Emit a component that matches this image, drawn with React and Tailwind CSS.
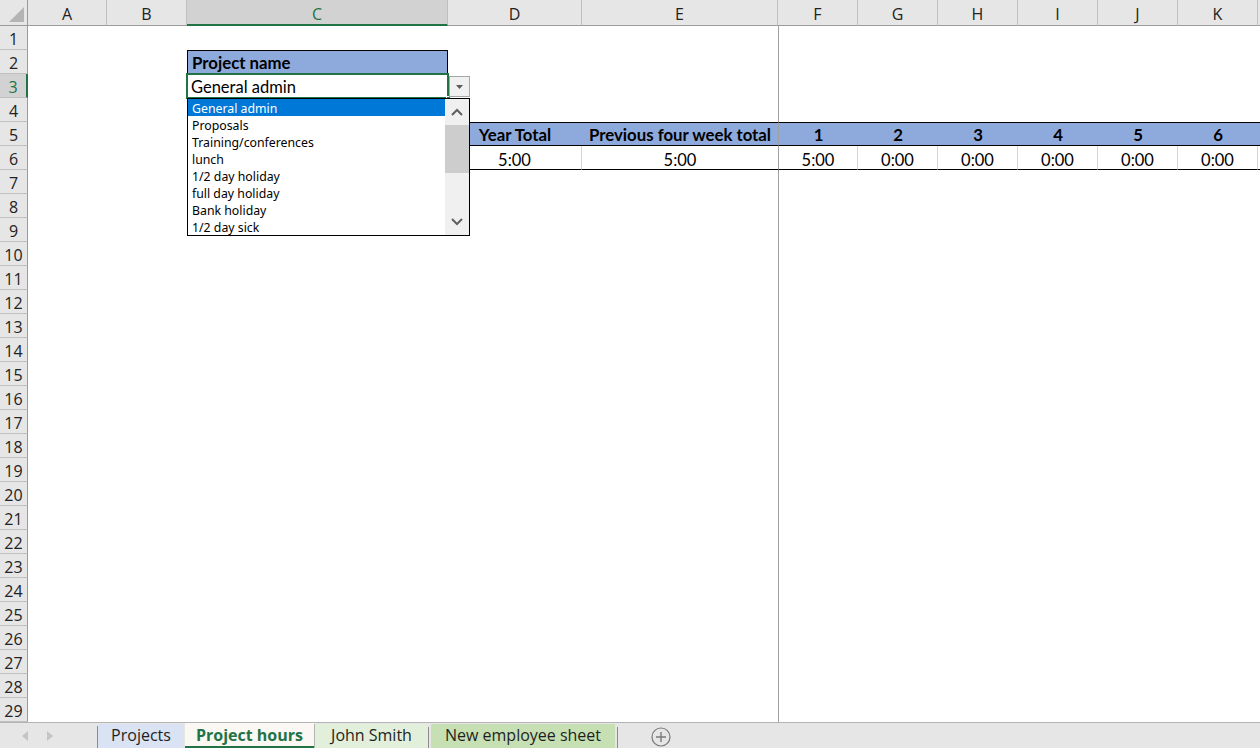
import React from 'react'

const COLS = [
  { k: 'A', w: 'w-[79px]' },
  { k: 'B', w: 'w-[80px]' },
  { k: 'C', w: 'w-[261px]' },
  { k: 'D', w: 'w-[134px]' },
  { k: 'E', w: 'w-[196px]' },
  { k: 'F', w: 'w-[80px]' },
  { k: 'G', w: 'w-[80px]' },
  { k: 'H', w: 'w-[80px]' },
  { k: 'I', w: 'w-[80px]' },
  { k: 'J', w: 'w-[80px]' },
  { k: 'K', w: 'w-[80px]' },
]

const HEAD5 = { D: 'Year Total', E: 'Previous four week total', F: '1', G: '2', H: '3', I: '4', J: '5', K: '6' }
const VAL6 = { D: '5:00', E: '5:00', F: '5:00', G: '0:00', H: '0:00', I: '0:00', J: '0:00', K: '0:00' }

const OPTIONS = [
  'General admin',
  'Proposals',
  'Training/conferences',
  'lunch',
  '1/2 day holiday',
  'full day holiday',
  'Bank holiday',
  '1/2 day sick',
]

const cellFont = { fontFamily: 'Lato, Carlito, Calibri, sans-serif' }
const uiFont = { fontFamily: '"Open Sans", "Segoe UI", sans-serif' }

const DropdownList = () => (
  <div className="absolute left-0 top-[24px] z-20 flex h-[138px] w-[283px] border border-black bg-white" style={{ fontFamily: '"Noto Sans", Tahoma, sans-serif' }}>
    <div className="flex-1">
      {OPTIONS.map((o, i) => (
        <div key={o} className={`h-[17px] pl-[4px] text-[12.3px] leading-[19px] ${i === 0 ? 'bg-[#0078d7] text-white' : 'text-black'}`}>{o}</div>
      ))}
    </div>
    <div className="flex w-[24px] flex-col bg-[#f0f0f0]">
      <div className="flex h-[26px] items-center justify-center">
        <svg width="12" height="8" viewBox="0 0 12 8"><path d="M1 7 L6 2 L11 7" fill="none" stroke="#606060" strokeWidth="2" /></svg>
      </div>
      <div className="h-[48px] bg-[#cdcdcd]" />
      <div className="flex-1" />
      <div className="flex h-[26px] items-center justify-center">
        <svg width="12" height="8" viewBox="0 0 12 8"><path d="M1 1 L6 6 L11 1" fill="none" stroke="#606060" strokeWidth="2" /></svg>
      </div>
    </div>
  </div>
)

const Cell = ({ row, col }) => {
  const k = col.k
  const freeze = k === 'F' ? 'border-l border-l-[#a0a0a0]' : ''
  if (row === 2 && k === 'C') {
    return (
      <div className={`${col.w} h-full border border-black bg-[#8ea9db] pl-[4px] text-[16.8px] font-bold leading-[24px] text-black`} style={cellFont}>Project name</div>
    )
  }
  if (row === 3 && k === 'C') {
    return (
      <div className={`${col.w} relative h-full`}>
        <div className="absolute inset-[-1px] border-2 border-[#217346]" />
        <div className="pl-[4px] pt-[1px] text-[16.5px] leading-[25px] text-black" style={cellFont}>General admin</div>
        <div className="absolute bottom-[-3px] right-[-3px] z-10 h-[5px] w-[5px] border border-white bg-[#217346]" />
        <div className="absolute left-[calc(100%+1px)] top-[2px] z-10 flex h-[21px] w-[21px] items-center justify-center border border-[#a6a6a6] bg-[#f0f0f0]">
          <svg width="7" height="4" viewBox="0 0 7 4"><path d="M0 0 L7 0 L3.5 4 Z" fill="#5a5a5a" /></svg>
        </div>
        <DropdownList />
      </div>
    )
  }
  if (row === 5 && HEAD5[k]) {
    return (
      <div className={`${col.w} ${freeze} h-full border-y border-y-black bg-[#8ea9db] text-center text-[16.8px] font-bold leading-[24px] text-black`} style={cellFont}>{HEAD5[k]}</div>
    )
  }
  if (row === 6 && VAL6[k]) {
    return (
      <div className={`${col.w} ${freeze} h-full border-b border-b-black ${k === 'E' ? '' : 'border-r border-r-[#d4d4d4]'} pt-[2px] text-center text-[16.5px] leading-[24px] text-black`} style={cellFont}>{VAL6[k]}</div>
    )
  }
  return <div className={`${col.w} ${freeze} h-full`} />
}

const Row = ({ n }) => {
  const active = n === 3
  let tail = ''
  if (n === 5) tail = 'bg-[#8ea9db] border-y border-y-black'
  if (n === 6) tail = 'border-b border-b-black'
  return (
    <div className="flex h-[24px]">
      <div
        className={`flex h-full w-[28px] shrink-0 items-center justify-center border-b border-b-[#c0c0c0] pt-[2px] text-[16px] ${active ? 'border-r-2 border-r-[#217346] bg-[#d2d2d2] text-[#217346]' : 'border-r border-r-[#9b9b9b] bg-[#e6e6e6] text-[#222]'}`}
        style={uiFont}
      >
        {n}
      </div>
      {COLS.map((c) => (
        <div key={c.k} className="shrink-0">
          <Cell row={n} col={c} />
        </div>
      ))}
      <div className={`h-full flex-1 ${tail}`} />
    </div>
  )
}

const HeaderRow = () => (
  <div className="flex h-[26px] bg-[#e6e6e6]" style={uiFont}>
    <div className="relative h-full w-[28px] shrink-0 border-b border-r border-[#9b9b9b]">
      <svg className="absolute bottom-[3px] right-[3px]" width="15" height="15" viewBox="0 0 15 15"><path d="M15 0 L15 15 L0 15 Z" fill="#b4b4b4" /></svg>
    </div>
    {COLS.map((c) => (
      <div
        key={c.k}
        className={`${c.w} flex h-full shrink-0 items-center justify-center border-r border-r-[#bfbfbf] pt-[3px] text-[16px] ${c.k === 'C' ? 'border-b-2 border-b-[#217346] bg-[#d2d2d2] text-[#217346]' : 'border-b border-b-[#9b9b9b] text-[#222]'}`}
      >
        {c.k}
      </div>
    ))}
    <div className="h-full flex-1 border-b border-b-[#9b9b9b]" />
  </div>
)

const TabSep = () => <div className="mt-[3px] h-[21px] w-px bg-[#8c8c8c]" />

const TabBar = () => (
  <div className="flex h-[26px] items-end border-t border-t-[#b4b4b4] bg-[#e6e6e6] text-[16px] leading-[20px]" style={uiFont}>
    <div className="flex h-full w-[97px] items-center gap-[19px] pl-[22px]">
      <svg width="6" height="10" viewBox="0 0 6 10"><path d="M6 0 L0 5 L6 10 Z" fill="#c4c4c4" /></svg>
      <svg width="6" height="10" viewBox="0 0 6 10"><path d="M0 0 L6 5 L0 10 Z" fill="#c4c4c4" /></svg>
    </div>
    <div className="h-[22px] w-px self-end bg-[#8c8c8c]" />
    <div className="flex h-[24px] w-[86px] items-start justify-center bg-[#dae3f3] pt-[1px] text-[#1f1f1f]">Projects</div>
    <div className="ml-px flex h-[25px] w-[129px] items-start justify-center border-b-2 border-b-[#217346] bg-[#fbf7f2] pt-[2px] font-bold text-[#217346]">Project hours</div>
    <div className="flex h-[24px] w-[114px] items-start justify-center border-l border-l-[#b4b4b4] bg-[#e2efda] pt-[1px] text-[#1f1f1f]">John Smith</div>
    <TabSep />
    <div className="ml-[2px] flex h-[24px] w-[184px] items-start justify-center bg-[#c6e0b4] pt-[1px] text-[#1f1f1f]">New employee sheet</div>
    <div className="ml-[2px]"><TabSep /></div>
    <div className="ml-[33px] flex h-full items-center pt-[2px]">
      <svg width="20" height="20" viewBox="0 0 20 20">
        <circle cx="10" cy="10" r="9" fill="none" stroke="#7a7a7a" strokeWidth="1.2" />
        <path d="M10 5 V15 M5 10 H15" stroke="#7a7a7a" strokeWidth="1.4" />
      </svg>
    </div>
  </div>
)

export default function App() {
  const rows = Array.from({ length: 29 }, (_, i) => i + 1)
  return (
    <div className="flex h-[748px] w-[1260px] flex-col overflow-hidden bg-white">
      <HeaderRow />
      <div className="flex flex-col">
        {rows.map((n) => <Row key={n} n={n} />)}
      </div>
      <TabBar />
    </div>
  )
}
